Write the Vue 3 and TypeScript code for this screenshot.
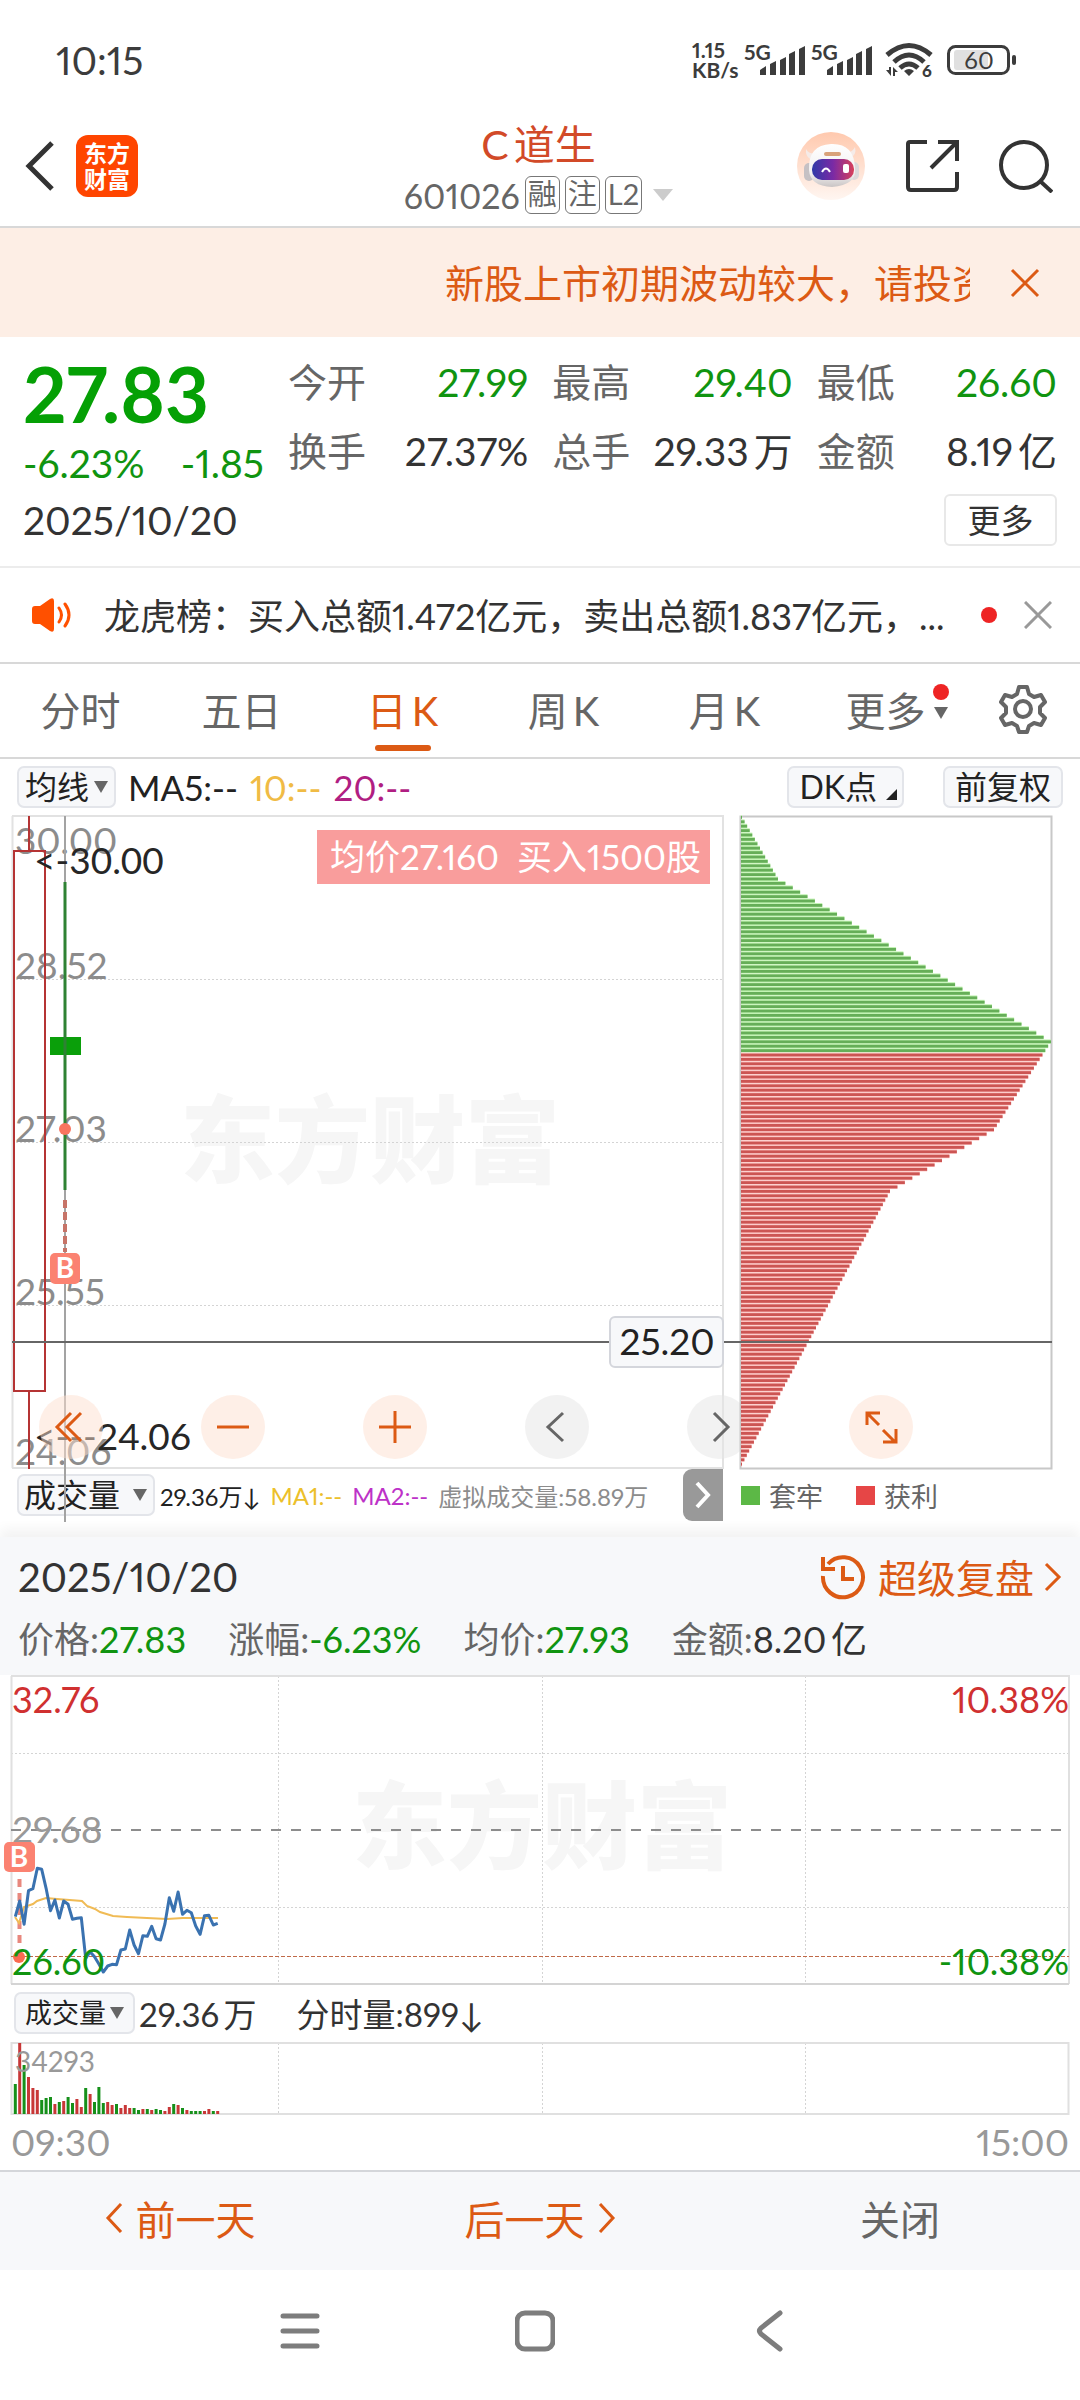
<script setup lang="ts">
import { ref } from 'vue'

interface Stat { label: string; value: string; down?: boolean }

const stats: Stat[] = [
  { label: '今开', value: '27.99', down: true },
  { label: '最高', value: '29.40', down: true },
  { label: '最低', value: '26.60', down: true },
  { label: '换手', value: '27.37%' },
  { label: '总手', value: '29.33万' },
  { label: '金额', value: '8.19亿' },
]

const periods = ['分时', '五日', '日K', '周K', '月K']
const period = ref('日K')

const dayStats: Stat[] = [
  { label: '价格', value: '27.83', down: true },
  { label: '涨幅', value: '-6.23%', down: true },
  { label: '均价', value: '27.93', down: true },
  { label: '金额', value: '8.20亿' },
]

/* Cost distribution: bar length by level, interpolated between its corner levels */
const corners: [number, number][] = [[0, 1], [14, 37], [51, 310], [71, 253], [85, 149], [147, 1]]
function costLength(level: number): number {
  for (let k = 1; k < corners.length; k++) {
    const [a, la] = corners[k - 1]
    const [b, lb] = corners[k]
    if (level <= b) return la + ((lb - la) * (level - a)) / (b - a)
  }
  return 0
}
const costs = Array.from({ length: 148 }, (_, i) => ({
  y: 1 + i * 4.4,
  length: costLength(i),
  trapped: i < 54,
}))

/* Intraday series, one value a minute, 4.4 units apart */
const minuteX = (i: number) => 15.3 + i * 4.4
const trace = [
  290, 243, 313, 212, 206, 145, 148, 205, 272, 240, 294, 243, 253, 298, 295, 293, 415, 395, 410, 432,
  456, 438, 433, 434, 390, 387, 330, 375, 401, 347, 349, 319, 356, 360, 312, 233, 274, 216, 283, 271,
  278, 318, 343, 287, 286, 315, 310,
]
const priceLine = trace.map((v, i) => `${minuteX(i).toFixed(1)},${(145 + v / 3).toFixed(1)}`).join(' ')
const averageLine = '15,242 19,248 24,232 33,229 37,226 46,223 57,224 82,226 87,231 95,234 100,237 113,241 127,242 147,243 167,244 183,243 218,243'

const volumes = [
  30, 71, 49, 37, 26, 24, 14, 16, 17, 10, 12, 13, 17, 11, 15, 7, 26, 20, 12, 27, 11, 12, 9, 10, 6, 9, 6,
  6, 4, 5, 5, 4, 5, 4, 3, 7, 10, 9, 6, 4, 3, 3, 3, 3, 5, 3, 3,
]
const rising = 'drdrrrdddrdrddrrdrdddrrdrrrddrdrddrrdrdrdddrrdr'
</script>

<template>
  <main class="screen">
    <div class="status">
      <span class="clock">10:15</span>
      <div class="indicators">
        <span class="speed">1.15<br />KB/s</span>
        <svg v-for="n in 2" :key="n" class="signal" width="62" height="36" viewBox="0 0 62 36">
          <text x="0" y="18" font-size="21" font-weight="700" fill="#3c3c3c">5G</text>
          <path d="M16 33v-5l6-4v9zM26 33V22l6-3v14zM36 33V18l6-3v18zM45 33V12l6-3v24zM55 33V7l6-3v29z" fill="#3c3c3c" />
        </svg>
        <svg class="wifi" width="48" height="36" viewBox="0 0 48 36">
          <g fill="none" stroke="#3c3c3c" stroke-width="5">
            <path d="M2 13Q24-6 46 13" /><path d="M9 20Q24 6 39 20" /><path d="M15 26Q24 18 33 26" />
          </g>
          <path d="M19 29q5-4 10 0l-5 5zM1 28h3v-3h2v9zM8 34v-9l5 5h-3v4z" fill="#3c3c3c" />
          <text x="37" y="35" font-size="17" font-weight="900" fill="#3c3c3c">6</text>
        </svg>
        <svg class="battery" width="70" height="30" viewBox="0 0 70 30">
          <rect x="7" y="5" width="34" height="20" rx="3" fill="#e0e0e0" />
          <rect x="1.500" y="1.500" width="60" height="27" rx="7" fill="none" stroke="#3c3c3c" stroke-width="3" />
          <rect x="65" y="10" width="4" height="10" rx="2" fill="#3c3c3c" />
          <text x="32" y="24" font-size="24" text-anchor="middle" fill="#3c3c3c">60</text>
        </svg>
      </div>
    </div>

    <header class="top">
      <div class="top-left">
        <button class="plain" aria-label="返回">
          <svg width="32" height="52" viewBox="0 0 32 52"><path d="M28 3 5 26l23 23" fill="none" stroke="#333" stroke-width="5" /></svg>
        </button>
        <a class="logo" href="#">东方<br />财富</a>
      </div>
      <div class="title">
        <h1>C道生</h1>
        <div class="code">
          <span>601026</span><i>融</i><i>注</i><i>L2</i>
          <svg width="20" height="12" viewBox="0 0 20 12"><path d="M0 0h20L10 12z" fill="#ccc" /></svg>
        </div>
      </div>
      <div class="top-right">
        <button class="plain" aria-label="智能助手">
          <svg width="68" height="68" viewBox="0 0 68 68">
            <defs>
              <linearGradient id="halo" x2="0" y2="1"><stop stop-color="#ffc9ae" /><stop offset="1" stop-color="#fff6f1" /></linearGradient>
              <linearGradient id="visor"><stop stop-color="#2f3aa8" /><stop offset=".5" stop-color="#7a2aa5" /><stop offset="1" stop-color="#d8405a" /></linearGradient>
              <linearGradient id="shell" x2="0" y2="1"><stop stop-color="#fff" /><stop offset=".7" stop-color="#f1efef" /><stop offset="1" stop-color="#c9c4c4" /></linearGradient>
            </defs>
            <circle cx="34" cy="34" r="34" fill="url(#halo)" />
            <path d="M9 17q-1 8 6 11l6-7q-9 2-12-4zM58 15q2 8-5 11l-7-6q9 2 12-5z" fill="#f5ebe8" />
            <rect x="7" y="31" width="10" height="18" rx="5" fill="#c5c1c4" />
            <rect x="52" y="30" width="10" height="18" rx="5" fill="#dcd8da" />
            <path d="M12 38Q11 13 34 12T58 36Q60 53 35 55 13 54 12 38z" fill="url(#shell)" />
            <rect x="27" y="20" width="17" height="4" rx="2" fill="#d9a27a" />
            <rect x="15" y="27" width="42" height="21" rx="10" fill="url(#visor)" />
            <path d="M25 40q4-7 8 0" fill="none" stroke="#fff" stroke-width="2" />
            <rect x="46" y="32" width="6" height="9" rx="2" fill="#fff" />
          </svg>
        </button>
        <button class="plain" aria-label="分享">
          <svg width="54" height="54" viewBox="0 0 54 54" fill="none" stroke="#333" stroke-width="4">
            <path d="M22 3H5Q3 3 3 5v43q0 3 3 3h43q3 0 3-3V33M33 3h19v19M51 4 26 29" />
          </svg>
        </button>
        <button class="plain" aria-label="搜索">
          <svg width="54" height="54" viewBox="0 0 54 54" fill="none" stroke="#333" stroke-width="4">
            <circle cx="25" cy="26" r="23" /><path d="m41 42 12 11" />
          </svg>
        </button>
      </div>
    </header>

    <div class="notice">
      <p>新股上市初期波动较大，请投资者注意风险</p>
      <button class="plain" aria-label="关闭提示">
        <svg width="30" height="30" viewBox="0 0 30 30"><path d="m2 2 26 26M28 2 2 28" stroke="#dc5a14" stroke-width="3" /></svg>
      </button>
    </div>

    <section class="quote">
      <div class="quote-main">
        <div class="last">
          <strong>27.83</strong>
          <div class="change"><span>-6.23%</span><span>-1.85</span></div>
        </div>
        <dl class="stats">
          <div v-for="s in stats" :key="s.label">
            <dt>{{ s.label }}</dt><dd :class="{ down: s.down }">{{ s.value }}</dd>
          </div>
        </dl>
      </div>
      <div class="quote-date">
        <time>2025/10/20</time>
        <button class="more">更多</button>
      </div>
    </section>

    <div class="news">
      <svg width="42" height="34" viewBox="0 0 42 34">
        <path d="M0 11q0-3 3-3h5L18 1q4-2 4 2v28q0 4-4 2l-10-7H3q-3 0-3-3z" fill="#ff5000" />
        <path d="M27 10q5 7 0 14M33 6q8 11 0 22" fill="none" stroke="#ff5000" stroke-width="3" stroke-linecap="round" />
      </svg>
      <a href="#">龙虎榜：买入总额1.472亿元，卖出总额1.837亿元，...</a>
      <b class="dot"></b>
      <button class="plain" aria-label="关闭资讯">
        <svg width="28" height="28" viewBox="0 0 28 28"><path d="m1 1 26 26M27 1 1 27" stroke="#999" stroke-width="3" /></svg>
      </button>
    </div>

    <nav class="tabs">
      <button v-for="p in periods" :key="p" :class="{ active: p === period }" @click="period = p">{{ p }}</button>
      <button class="tab-more">更多
        <span><b class="dot"></b><svg width="14" height="12" viewBox="0 0 14 12"><path d="M0 0h14L7 12z" fill="#666" /></svg></span>
      </button>
      <button class="gear" aria-label="设置">
        <svg width="48" height="50" viewBox="0 0 48 50" fill="none" stroke="#666" stroke-width="4" stroke-linejoin="round">
          <path d="M20 3h8l2 7 5 3 7-2 4 7-5 5v6l5 5-4 7-7-2-5 3-2 6h-8l-2-6-5-3-7 2-4-7 5-5v-6l-5-5 4-7 7 2 5-3z" /><circle cx="24" cy="25" r="8" />
        </svg>
      </button>
    </nav>

    <div class="ma">
      <label class="drop">
        <select aria-label="主图指标"><option>均线</option></select>
        <svg width="14" height="12" viewBox="0 0 14 12"><path d="M0 0h14L7 12z" fill="#666" /></svg>
      </label>
      <span>MA5:--</span><span class="yellow">10:--</span><span class="purple">20:--</span>
      <button class="chip dk">DK点<svg width="11" height="11" viewBox="0 0 11 11"><path d="M11 0v11H0z" fill="#222" /></svg></button>
      <button class="chip">前复权</button>
    </div>

    <section class="kline">
      <svg class="candles" viewBox="0 0 728 654">
        <text class="mark" x="180" y="361">东方财富</text>
        <g stroke="#d4d4d4" stroke-dasharray="2 2"><path d="M12 164.500h711M12 327.500h711M12 490.500h711" /></g>
        <path d="M12.500 1v652M723 1v652" stroke="#e2e2e2" stroke-width="2" />
        <path d="M12 1h712M12 653h712" stroke="#e2e2e2" stroke-width="2" />
        <g font-size="37" fill="#8c8c8c">
          <text x="15" y="39">30.00</text><text x="15" y="164">28.52</text><text x="15" y="327">27.03</text>
          <text x="15" y="490">25.55</text><text x="15" y="650">24.06</text>
        </g>
        <path d="M29 1v35M14 36h31v540H14zM29 576v78" fill="none" stroke="#b53434" stroke-width="2" />
        <rect x="50" y="222" width="31" height="18" fill="#0a9f0a" />
        <path d="M65 67v308" stroke="#2e8233" stroke-width="3" />
        <path d="M65 1v66M65 375v332" stroke="#a3a3a3" stroke-width="2" />
        <circle cx="65" cy="314" r="6" fill="#f8745f" />
        <path d="M65 385v52" stroke="#c77468" stroke-width="4" stroke-dasharray="8 4" />
        <rect x="50" y="438" width="30" height="31" rx="5" fill="#fb8271" />
        <text x="65" y="463" font-size="28" font-weight="700" fill="#fff" text-anchor="middle">B</text>
        <g class="extremes" font-size="37" fill="#262626">
          <text x="34" y="59">&lt;-30.00</text><text x="34" y="635">&lt;---24.06</text>
        </g>
        <path d="M12 527h716" stroke="#666" stroke-width="2" />
        <rect x="317" y="15" width="393" height="54" fill="#f99d9c" />
        <text class="tight" x="330" y="55" font-size="35" fill="#fff">均价27.160&#160;&#160;买入1500股</text>
        <rect x="610" y="502" width="113" height="50" rx="5" fill="#f7f8fa" stroke="#d4d6dc" stroke-width="2" />
        <text x="667" y="540" font-size="37" fill="#222" text-anchor="middle">25.20</text>
      </svg>
      <svg class="profile" viewBox="0 0 352 654">
        <path d="M12.500 1.500h311v652h-311z" fill="none" stroke="#c8c8c8" stroke-width="2" />
        <g v-for="(c, i) in costs" :key="i">
          <rect x="13" :y="c.y - 1" :width="c.length" height="4.400" :fill="c.trapped ? '#c3f3b4' : '#fcc3c1'" />
          <rect x="13" :y="c.y" :width="c.length" height="2.800" :fill="c.trapped ? '#66ae58' : '#cc5553'" />
        </g>
        <path d="M0 527h324" stroke="#666" stroke-width="2" />
      </svg>
      <div class="tools">
        <button aria-label="最早"><svg viewBox="0 0 64 64"><path d="M32 18 18 32l14 14M42 18 28 32l14 14" /></svg></button>
        <button aria-label="缩小"><svg viewBox="0 0 64 64"><path d="M16 32h32" /></svg></button>
        <button aria-label="放大"><svg viewBox="0 0 64 64"><path d="M16 32h32M32 16v32" /></svg></button>
        <button class="gray" aria-label="左移"><svg viewBox="0 0 64 64"><path d="M38 18 23 32l15 14" /></svg></button>
        <button class="gray" aria-label="右移"><svg viewBox="0 0 64 64"><path d="m27 18 14 14-14 14" /></svg></button>
        <button aria-label="全屏"><svg viewBox="0 0 64 64"><path d="M18 30V18h13M19 19l11 11M34 35l12 12M47 34v13H34" /></svg></button>
      </div>
    </section>

    <div class="volume">
      <div class="volume-left">
        <label class="drop">
          <select aria-label="副图指标"><option>成交量</option></select>
          <svg width="14" height="12" viewBox="0 0 14 12"><path d="M0 0h14L7 12z" fill="#666" /></svg>
        </label>
        <span>29.36万↓</span><span class="gold">MA1:--</span><span class="violet">MA2:--</span>
        <span class="dim">虚拟成交量:58.89万</span>
        <button class="expand" aria-label="展开">
          <svg width="18" height="28" viewBox="0 0 18 28"><path d="m3 2 11 12L3 26" fill="none" stroke="#fff" stroke-width="4" /></svg>
        </button>
      </div>
      <div class="legend"><i class="g"></i>套牢<i class="r"></i>获利</div>
    </div>

    <section class="replay">
      <div class="replay-head">
        <div class="replay-row">
          <time>2025/10/20</time>
          <a href="#">
            <svg width="46" height="46" viewBox="0 0 46 46" fill="none" stroke="#dc5a14" stroke-width="4">
              <path d="M3 22A20 20 0 1 0 8 10M3 3v12h12M23 12v13h11" />
            </svg>
            <span>超级复盘</span>
            <svg class="go" width="18" height="30" viewBox="0 0 18 30"><path d="m2 2 13 13L2 28" fill="none" stroke="#dc5a14" stroke-width="3" /></svg>
          </a>
        </div>
        <div class="day-stats">
          <span v-for="s in dayStats" :key="s.label">{{ s.label }}:<em :class="{ down: s.down }">{{ s.value }}</em></span>
        </div>
      </div>
      <svg class="wide" viewBox="0 0 1080 311">
        <text class="mark" x="352" y="187">东方财富</text>
        <g stroke="#d4d4d4" stroke-dasharray="2 2">
          <path d="M11 78.500h1058M11 232.500h1058M278.500 1v308M542.500 1v308M805.500 1v308" />
        </g>
        <path d="M11 1h1058v308" fill="none" stroke="#e0e0e0" stroke-width="2" />
        <path d="M11.500 1v308" stroke="#e0e0e0" stroke-width="2" />
        <path d="M11 309h1058" stroke="#d4d4d4" stroke-width="2" />
        <path d="M11 155h1058" stroke="#8c8c8c" stroke-width="2" stroke-dasharray="10 10" />
        <path d="M11 281.500h1058" stroke="#c06a48" stroke-width="1" stroke-dasharray="4 2" />
        <text x="12" y="168" font-size="37" fill="#999">29.68</text>
        <path d="M19.500 204v70" stroke="#e8887e" stroke-width="4" stroke-dasharray="8 6" />
        <polyline :points="averageLine" fill="none" stroke="#f0bb55" stroke-width="2" />
        <polyline :points="priceLine" fill="none" stroke="#3a72b0" stroke-width="3" stroke-linejoin="round" />
        <circle cx="19" cy="282" r="6" fill="#fa6a50" />
        <rect x="4" y="167" width="31" height="30" rx="5" fill="#fb8271" />
        <text x="19" y="192" font-size="28" font-weight="700" fill="#fff" text-anchor="middle">B</text>
        <g font-size="36">
          <text x="12" y="38" fill="#d03030">32.76</text>
          <text x="1069" y="38" fill="#d03030" text-anchor="end">10.38%</text>
          <text x="12" y="300" fill="#109410">26.60</text>
          <text x="1069" y="300" fill="#109410" text-anchor="end">-10.38%</text>
        </g>
      </svg>
      <div class="minute">
        <label class="drop small">
          <select aria-label="分时副图指标"><option>成交量</option></select>
          <svg width="14" height="12" viewBox="0 0 14 12"><path d="M0 0h14L7 12z" fill="#666" /></svg>
        </label>
        <span>29.36万</span><span>分时量:899↓</span>
      </div>
      <svg class="wide" viewBox="0 0 1080 74">
        <path d="M278.500 1v71M542.500 1v71M805.500 1v71" stroke="#d4d4d4" stroke-dasharray="2 2" />
        <path d="M11.500 1h1057v71h-1057z" fill="none" stroke="#e0e0e0" stroke-width="2" />
        <rect v-for="(v, i) in volumes" :key="i" :x="minuteX(i) - 1.5" :y="72 - v" width="3" :height="v" :fill="rising[i] === 'r' ? '#c83737' : '#16901a'" />
        <text x="15" y="30" font-size="28" fill="#999">34293</text>
      </svg>
      <div class="axis"><span>09:30</span><span>15:00</span></div>
    </section>

    <div class="days">
      <button><svg width="18" height="30" viewBox="0 0 18 30"><path d="M16 1 3 15l13 14" fill="none" stroke="#dc5a14" stroke-width="3" /></svg>前一天</button>
      <button>后一天<svg width="18" height="30" viewBox="0 0 18 30"><path d="m2 1 13 14L2 29" fill="none" stroke="#dc5a14" stroke-width="3" /></svg></button>
      <button class="close">关闭</button>
    </div>

    <nav class="system">
      <button class="plain" aria-label="最近任务"><svg width="40" height="42" viewBox="0 0 40 42" stroke="#7d7d7d" stroke-width="5" stroke-linecap="round"><path d="M3 6h34M3 21h34M3 36h34" /></svg></button>
      <button class="plain" aria-label="主屏幕"><svg width="40" height="42" viewBox="0 0 40 42"><rect x="2" y="3" width="36" height="36" rx="8" fill="none" stroke="#7d7d7d" stroke-width="5" /></svg></button>
      <button class="plain" aria-label="返回"><svg width="40" height="42" viewBox="0 0 40 42"><path d="M30 3 11 18q-3 3 0 6l19 15" fill="none" stroke="#7d7d7d" stroke-width="5" stroke-linecap="round" /></svg></button>
    </nav>
  </main>
</template>

<style>
body { margin: 0; background: #fff; }
</style>

<style scoped>
.screen { font-family: Lato, "Noto Sans CJK SC", sans-serif; font-variant-numeric: proportional-nums; color: #333; background: #fff; text-autospace: normal; }
.screen * { box-sizing: border-box; }
svg { display: block; flex: none; }
button, select { font: inherit; font-variant-numeric: inherit; color: inherit; border: 0; padding: 0; margin: 0; background: none; }
a { color: inherit; text-decoration: none; }
i, em { font-style: normal; }
.plain { display: block; line-height: 1; }
.down { color: #109410; }

.status { height: 120px; padding: 0 63px 0 56px; display: flex; align-items: center; justify-content: space-between; }
.clock { font-size: 39px; color: #3c3c3c; }
.indicators { display: flex; align-items: center; }
.speed { width: 46px; margin-right: 6px; font-size: 21px; line-height: 20px; font-weight: 700; color: #3c3c3c; }
.signal { margin-right: 5px; overflow: visible; }
.wifi { margin: 0 14px 0 7px; overflow: visible; }

.top { height: 108px; padding: 0 27px 0 24px; border-bottom: 2px solid #d8d8d8; display: grid; grid-template-columns: 1fr auto 1fr; align-items: center; }
.top-left, .top-right { display: flex; align-items: center; padding-bottom: 14px; }
.top-left { gap: 20px; }
.logo { width: 62px; height: 62px; border-radius: 12px; background: #ff4500; color: #fff; font-size: 23px; line-height: 26px; font-weight: 700; text-align: center; padding-top: 5px; }
.title { text-align: center; padding-bottom: 6px; }
h1 { margin: 0; font-size: 41px; line-height: 50px; font-weight: 400; color: #d24a28; }
.code { display: flex; align-items: center; justify-content: center; gap: 5px; height: 50px; font-size: 34px; color: #666; }
.code i { min-width: 35px; height: 38px; border: 1px solid #777; border-radius: 6px; font-size: 29px; line-height: 34px; padding: 0 2px; }
.code svg { margin-left: 6px; }
.top-right { justify-content: flex-end; gap: 40px; }

.notice { height: 109px; background: #fdeee5; display: flex; align-items: center; padding-right: 40px; color: #dc5a14; }
.notice p { flex: 1; margin: 0 40px 4px 445px; font-size: 39px; white-space: nowrap; overflow: hidden; }

.quote { padding: 11px 23px 14px; border-bottom: 2px solid #ececec; }
.quote-main { display: flex; gap: 24px; height: 138px; }
.last { width: 241px; color: #05a005; white-space: nowrap; }
.last strong { display: block; font-size: 76px; line-height: 92px; }
.change { display: flex; justify-content: space-between; font-size: 39px; line-height: 46px; color: #109410; }
.stats { flex: 1; margin: 0; display: grid; grid-template-columns: repeat(3, 1fr); column-gap: 24px; font-size: 39px; line-height: 69px; }
.stats div { display: flex; justify-content: space-between; }
dt { color: #666; }
dd { margin: 0; }
.quote-date { display: flex; justify-content: space-between; align-items: center; height: 66px; padding-top: 2px; font-size: 39px; }
.more { width: 113px; height: 52px; border: 2px solid #e8e8e8; border-radius: 6px; font-size: 33px; line-height: 48px; }

.news { height: 96px; padding: 0 28px 0 32px; border-bottom: 2px solid #d8d8d8; display: flex; align-items: center; }
.news a { flex: 1; min-width: 0; margin: 0 0 2px 30px; font-size: 36px; white-space: nowrap; text-autospace: no-autospace; }
.dot { width: 16px; height: 16px; border-radius: 50%; background: #ee2424; }
.news .dot { margin-right: 27px; }

.tabs { display: flex; height: 95px; border-bottom: 2px solid #d8d8d8; font-size: 40px; color: #666; }
.tabs button { flex: 1; position: relative; padding-bottom: 3px; }
.tabs .active { color: #dc5a14; }
.tabs .active::after { content: ""; position: absolute; left: 50%; bottom: 6px; width: 56px; height: 6px; margin-left: -28px; border-radius: 3px; background: #dc5a14; }
.tab-more span { position: absolute; right: 17px; top: 20px; display: grid; gap: 7px; justify-items: center; }
.tabs .gear { flex: none; width: 114px; display: grid; place-items: center; }

.ma { height: 56px; padding: 0 17px; display: flex; align-items: center; gap: 12px; font-size: 35px; color: #222; }
.drop { height: 42px; padding: 0 6px; border: 2px solid #e3e5ea; border-radius: 7px; background: #f7f8fa; display: flex; align-items: center; gap: 4px; font-size: 32px; color: #222; }
.drop select { appearance: none; line-height: 38px; height: 38px; }
.chip { height: 42px; padding: 0 10px; border: 2px solid #e3e5ea; border-radius: 7px; background: #f7f8fa; font-size: 32px; line-height: 36px; }
.dk { margin-left: auto; display: flex; align-items: center; gap: 9px; margin-right: 27px; padding: 0 5px 0 10px; text-autospace: no-autospace; }
.dk svg { align-self: flex-end; margin-bottom: 6px; }
.yellow { color: #f0bb45; }
.purple { color: #b01e82; }

.kline { position: relative; display: grid; grid-template-columns: 728fr 352fr; }
.kline > svg { width: 100%; overflow: visible; position: relative; }
.profile { z-index: 2; pointer-events: none; }
.mark { font-size: 95px; font-weight: 900; fill: #f6f6f6; }
.tight { text-autospace: no-autospace; }
.extremes { font-variant-numeric: tabular-nums; }
.tools { position: absolute; z-index: 1; left: 0; right: 0; bottom: 10px; padding: 0 167px 0 39px; display: flex; justify-content: space-between; }
.tools button { width: 64px; height: 64px; border-radius: 50%; background: rgba(253, 224, 207, 0.5); }
.tools svg { fill: none; stroke: #dc5a14; stroke-width: 3; }
.tools .gray { background: rgba(230, 230, 230, 0.5); }
.tools .gray svg { stroke: #666; }

.volume { display: grid; grid-template-columns: 728fr 352fr; height: 52px; align-items: center; }
.volume-left { display: flex; align-items: center; gap: 10px; padding: 0 5px 0 17px; font-size: 24px; color: #222; white-space: nowrap; text-autospace: no-autospace; }
.volume .drop { gap: 12px; margin-right: -5px; padding: 0 6px 0 5px; }
.gold { color: #ecc02a; }
.violet { color: #bd32c8; }
.dim { color: #8c8c8c; }
.expand { margin-left: auto; width: 40px; height: 52px; border-radius: 9px 0 0 9px; background: #999; display: grid; place-items: center; }
.legend { display: flex; align-items: center; padding-left: 13px; font-size: 27px; color: #666; }
.legend i { width: 19px; height: 19px; margin-right: 9px; background: #5cb846; }
.legend .r { margin-left: 33px; background: #e64646; }

.replay { margin-top: 16px; }
.replay-head { height: 138px; background: #f7f8fa; padding: 0 18px; box-shadow: 0 -8px 12px rgba(0, 0, 0, 0.05); clip-path: inset(-16px 0 0 0); }
.replay-row { display: flex; justify-content: space-between; align-items: center; height: 80px; font-size: 40px; }
.replay-row a { display: flex; align-items: center; gap: 12px; font-size: 39px; color: #dc5a14; }
.replay-row a span { margin-bottom: 3px; }
.go { margin-left: -2px; }
.day-stats { display: flex; gap: 42px; font-size: 36px; line-height: 44px; color: #666; }
.day-stats em { color: #333; }
.day-stats .down { color: #109410; }
.wide { width: 100%; height: auto; }
.minute { height: 56px; padding: 0 14px 2px; display: flex; align-items: center; font-size: 33px; }
.minute span { margin-right: 36px; margin-left: 4px; }
.minute .drop { font-size: 27px; width: 121px; justify-content: center; }
.axis { display: flex; justify-content: space-between; align-items: center; height: 54px; padding: 0 11px 4px; font-size: 37px; color: #999; }

.days { display: flex; height: 100px; border-top: 2px solid #d4d6da; background: #f7f8fa; font-size: 40px; color: #dc5a14; }
.days button { flex: 1; display: flex; align-items: center; justify-content: center; gap: 13px; padding-bottom: 6px; }
.days .close { color: #666; }
.system { display: flex; align-items: center; justify-content: center; gap: 195px; height: 122px; padding-right: 10px; }
</style>
